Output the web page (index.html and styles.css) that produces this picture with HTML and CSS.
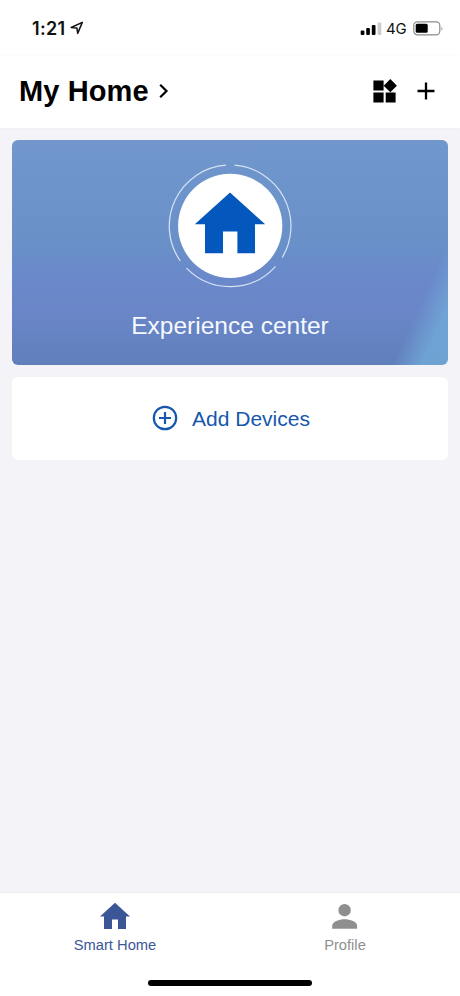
FILE: index.html
```html
<!DOCTYPE html>
<html lang="en">
<head>
<meta charset="utf-8">
<title>My Home</title>
<link rel="stylesheet" href="styles.css">
</head>
<body>
<div class="app">
  <div class="status">
    <span class="time">1:21</span>
    <svg class="locate" width="14" height="14" viewBox="0 0 14 14"><path d="M1.2 6.5 12.3 1.4 7.7 12.4 6.9 7.1Z" fill="none" stroke="#111" stroke-width="1.5" stroke-linejoin="round"/></svg>
    <svg class="signal" width="22" height="14" viewBox="0 0 22 14"><rect x="0.7" y="8.5" width="3.7" height="4.5" rx="1"/><rect x="6.2" y="6" width="3.7" height="7" rx="1"/><rect x="11.8" y="3" width="3.7" height="10" rx="1"/><rect x="17.6" y="0.5" width="3.7" height="12.5" rx="1" fill="#ccc"/></svg>
    <span class="network">4G</span>
    <svg class="battery" width="31" height="15" viewBox="0 0 31 15"><rect x="0.8" y="0.8" width="26" height="13" rx="3.6" fill="none" stroke="#8c8c8c" stroke-width="1.2"/><rect x="2.7" y="2.8" width="12" height="9" rx="1.5"/><path d="M28.5 5.4q1.8 2 0 4z" fill="#888"/></svg>
  </div>
  <header class="header">
    <h1>My Home</h1>
    <svg class="chevron" width="12" height="16" viewBox="0 0 12 16"><path d="m2.2 1.8 6.3 6.2-6.3 6.2" fill="none" stroke="#000" stroke-width="2.2"/></svg>
    <svg class="widgets" width="25" height="24" viewBox="0 0 25 24"><path d="M.4 1.6h10.2v10H.4zM.4 13.6h10.2v9.8H.4zM12.7 13.6h9.9v9.8h-9.9zM17.3.1l6.6 6.6-6.6 6.5-6.6-6.5z"/></svg>
    <svg class="plus" width="18" height="18" viewBox="0 0 18 18"><path d="M9 .5v17M.5 9h17" stroke="#000" stroke-width="2.3"/></svg>
  </header>
  <main class="content">
    <section class="hero">
      <svg class="emblem" width="126" height="126" viewBox="0 0 126 126">
        <g fill="none" stroke="#d5e3f5" stroke-width="1.2">
          <path d="M67.5 2.2A61 61 0 0 1 115.2 94.5"/>
          <path d="M108.6 103.4A61 61 0 0 1 19.5 105.2"/>
          <path d="M13.3 98A61 61 0 0 1 59 2.2"/>
        </g>
        <circle cx="63.2" cy="62.9" r="52.1" fill="#fff"/>
        <path d="M63 29.4 98.2 61.3H88v29H70.4V68.6H56V90.3H38V61.3H27.8Z" fill="#0457bc"/>
      </svg>
      <p>Experience center</p>
    </section>
    <button class="add">
      <svg width="26" height="26" viewBox="0 0 26 26"><g fill="none" stroke="#1557ad" stroke-width="2.2"><circle cx="13" cy="13" r="11.2"/><path d="M13 7v12M7 13h12"/></g></svg>
      <span>Add Devices</span>
    </button>
  </main>
  <footer class="footer">
    <nav class="tabs">
      <a class="tab active"><svg width="32" height="28" viewBox="0 0 32 28"><path d="M16 .8 31 14.6h-4V27H19V17.6h-6V27H5V14.6H1Z" fill="#3a5697"/></svg><span>Smart Home</span></a>
      <a class="tab"><svg width="32" height="28" viewBox="0 0 32 28"><g fill="#8f8f8f"><circle cx="15.6" cy="8.2" r="6.2"/><path d="M3.2 26.8v-3.2c0-4 7-6.4 12.4-6.4s12.5 2.4 12.5 6.4v3.2z"/></g></svg><span>Profile</span></a>
    </nav>
    <div class="indicator"></div>
  </footer>
</div>
</body>
</html>
```
FILE: styles.css
```css
* { box-sizing: border-box; }
body { margin: 0; font-family: "Liberation Sans", Arial, sans-serif; background: #f4f4f8; }
svg { display: block; flex: none; }
.app { width: 460px; height: 996px; display: flex; flex-direction: column; overflow: hidden; }
.status { height: 56px; flex: none; background: #fff; display: flex; align-items: center; padding: 0 16px 0 32px; color: #111; }
.time { font: 600 18px/20px Inter, sans-serif; width: 35px; margin-top: 2px; letter-spacing: .3px; }
.locate { margin-left: 3px; }
.signal { margin: 2px 0 0 auto; }
.network { font: 400 15px/20px Inter, sans-serif; margin: 2px 6px 0 4px; width: 21px; letter-spacing: -0.1px; }
.header { height: 72px; flex: none; background: #fff; display: flex; align-items: center; padding: 0 25px 0 19px; box-shadow: 0 0 3px rgba(0,0,0,.04); }
.header h1 { margin: -3px 0 0; font-size: 29px; line-height: 34px; font-weight: 700; letter-spacing: .1px; }
.chevron { margin: -3px 0 0 9px; }
.widgets { margin: -3px 19px 0 auto; }
.plus { margin-top: -2px; }
.content { flex: 1; padding: 12px 12px 0; display: flex; flex-direction: column; gap: 12px; }
.hero { height: 224.5px; border-radius: 6px; display: flex; flex-direction: column; align-items: center; padding-top: 23px; color: #f6f9ff;
  background: linear-gradient(115deg, transparent 89.5%, rgba(112,168,215,.85) 95%), linear-gradient(#7197cd, #6991c8 45%, #6a89ca 60%, #6a86c8 76%, #607fbb); }
.hero p { margin: 22px 0 0; font-size: 24.5px; line-height: 30px; }
.add { height: 83px; border: 0; border-radius: 6px; background: #fff; color: #1557ad; display: flex; align-items: center; justify-content: center; gap: 14px; padding: 0 0 1px 2px; font: 21px/26px "Liberation Sans", Arial, sans-serif; }
.add span { margin-top: 2px; }
.footer { height: 104px; flex: none; background: #fff; border-top: 1px solid #ececee; display: flex; flex-direction: column; align-items: center; }
.tabs { width: 100%; display: grid; grid-template-columns: 1fr 1fr; padding-top: 9px; }
.tab { display: flex; flex-direction: column; align-items: center; color: #8f8f8f; font-size: 14.7px; line-height: 18px; }
.tab span { margin-top: 6px; }
.active { color: #3a5697; }
.indicator { width: 164px; height: 6px; border-radius: 3px; background: #000; margin-top: 26px; }
```
